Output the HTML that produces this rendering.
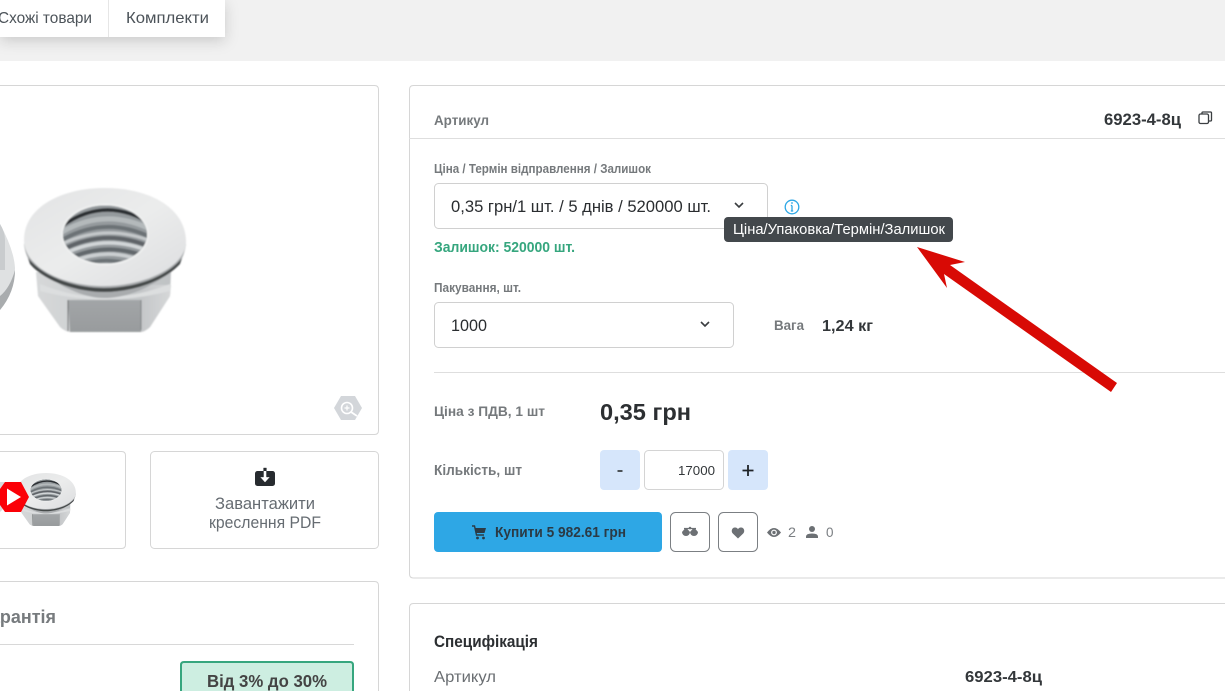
<!DOCTYPE html>
<html lang="uk">
<head>
<meta charset="utf-8">
<title>6923-4-8ц</title>
<style>
html,body{margin:0;padding:0;width:1225px;height:691px;overflow:hidden;background:#fff}
svg{display:block;overflow:hidden}
text{font-family:"Liberation Sans",Arial,sans-serif;white-space:pre}
.b{font-weight:700}
</style>
</head>
<body>
<svg width="1225" height="691" viewBox="0 0 1225 691" xmlns="http://www.w3.org/2000/svg">
<defs>
<filter id="sh" x="-20%" y="-50%" width="140%" height="220%"><feDropShadow dx="0" dy="4" stdDeviation="7" flood-color="#000" flood-opacity=".16"/></filter>
<filter id="soft" x="-5%" y="-5%" width="110%" height="110%"><feGaussianBlur stdDeviation=".7"/></filter>
<linearGradient id="fl" x1="0" y1="0" x2="1" y2="1"><stop offset="0" stop-color="#e2e3e4"/><stop offset=".5" stop-color="#ebecec"/><stop offset="1" stop-color="#dcdddf"/></linearGradient>
<linearGradient id="face" x1="0" y1="0" x2="0" y2="1"><stop offset="0" stop-color="#a2a5a7"/><stop offset="1" stop-color="#989b9d"/></linearGradient>
<linearGradient id="sideL" x1="0" y1="0" x2="1" y2="0"><stop offset="0" stop-color="#d6d8d9"/><stop offset="1" stop-color="#bfc2c4"/></linearGradient>
<linearGradient id="sideR" x1="0" y1="0" x2="1" y2="0"><stop offset="0" stop-color="#c4c6c8"/><stop offset="1" stop-color="#d6d8d9"/></linearGradient>
<clipPath id="hole"><ellipse cx="105" cy="234.500" rx="42" ry="29"/></clipPath>
<g id="nut" filter="url(#soft)">
  <path d="M36 272L38 296L60 327Q65 332 72 332H138Q145 332 150 327L170 296L171 272Z" fill="url(#sideL)"/>
  <path d="M141 285H171L170 296L150 327Q145 332 140 332Z" fill="url(#sideR)"/>
  <path d="M68 300H141V332H70Z" fill="url(#face)"/>
  <path d="M68 300V331" stroke="#5f6264" stroke-width="1"/>
  <path d="M141 300V330" stroke="#7d8082" stroke-width="1"/>
  <path d="M40 284Q104 310 170 284V291Q104 308 40 291Z" fill="#dcdedf"/>
  <path d="M24 244C26 262 36 271 48 277C66 289 86 298 104 298C126 298 146 289 164 277C176 270 184 260 186 244Z" fill="#a9acae"/>
  <path d="M28 258C46 280 80 288 104 288C130 288 164 280 182 258L180 264C162 283 130 292 104 292C80 292 46 283 30 264Z" fill="#45484a"/>
  <path d="M24 240C24 208 60 188 105 188C150 188 186 208 186 242C186 266 146 286 104 286C60 286 24 266 24 240Z" fill="url(#fl)"/>
  <ellipse cx="105" cy="234.500" rx="44" ry="31" fill="#eff0f0"/>
  <ellipse cx="105" cy="234.500" rx="42" ry="29" fill="#868c8f"/>
  <g clip-path="url(#hole)" fill="none">
    <rect x="60" y="204" width="90" height="62" fill="#949a9d" stroke="none"/>
    <path d="M62 226Q104 196 148 222" stroke="#2c2e30" stroke-width="3.500"/>
    <path d="M62 232Q104 208 148 228" stroke="#b4b9bb" stroke-width="5"/>
    <path d="M62 240Q104 216 148 236" stroke="#6c7276" stroke-width="4"/>
    <path d="M62 244Q104 224 148 240" stroke="#c4c8ca" stroke-width="3"/>
    <path d="M62 250Q104 228 148 246" stroke="#5e6367" stroke-width="4"/>
    <path d="M64 254Q104 234 146 250" stroke="#d2d6d8" stroke-width="3.500"/>
    <path d="M66 260Q104 241 144 256" stroke="#62686c" stroke-width="4"/>
    <path d="M70 263Q104 247 140 260" stroke="#cbcfd1" stroke-width="3.500"/>
    <path d="M72 268Q104 254 136 266" stroke="#6c7276" stroke-width="3.500"/>
    <path d="M78 270Q104 260 132 268" stroke="#aeb3b6" stroke-width="3"/>
  </g>
</g>
</defs>

<rect width="1225" height="691" fill="#fff"/>
<!-- top band -->
<rect width="1225" height="61" fill="#f1f1f1"/>
<path d="M0 0H225V37H0Z" fill="#fff" filter="url(#sh)"/>
<rect x="108" y="0" width="1" height="37" fill="#e6e6e6"/>
<text x="-2" y="23" font-size="16" fill="#4c5359" textLength="94" lengthAdjust="spacingAndGlyphs">Схожі товари</text>
<text x="126" y="23" font-size="16" fill="#4c5359" textLength="83" lengthAdjust="spacingAndGlyphs">Комплекти</text>

<!-- left cards -->
<path d="M0 85.500H374.500Q378.500 85.500 378.500 89.500V430.500Q378.500 434.500 374.500 434.500H0" fill="#fff" stroke="#d6d6d6"/>
<use href="#nut"/>
<path d="M0 224Q14 250 15 268Q15 292 0 310Z" fill="#dfe1e2"/>
<path d="M0 224Q5 232 5 240V270H0Z" fill="#c9ccce"/>
<path d="M0 296Q10 288 15 270Q15 292 0 310Z" fill="#a9acae"/>
<path d="M334 408L341 396H355L362 408L355 420H341Z" fill="#d3d6da"/>
<circle cx="347" cy="408" r="5.500" fill="none" stroke="#fff" stroke-width="1.600"/>
<path d="M344.500 408H349.500M347 405.500V410.500" stroke="#fff" stroke-width="1.200"/>
<path d="M351 412L357 416" stroke="#fff" stroke-width="1.800"/>

<path d="M0 451.500H121.500Q125.500 451.500 125.500 455.500V544.500Q125.500 548.500 121.500 548.500H0" fill="#fff" stroke="#d6d6d6"/>
<g transform="translate(7.400 403.800) scale(.368)"><use href="#nut"/></g>
<path d="M0 512Q8 505 10 494V482H0Z" fill="#d8dadb"/>
<path d="M0 489L5 482H21L29 497L21 512H5L0 505Z" fill="#fb0007"/>
<path d="M7 488.500L21 497L7 505.500Z" fill="#fff"/>

<rect x="150.500" y="451.500" width="228" height="97" rx="4" fill="#fff" stroke="#d6d6d6"/>
<rect x="255" y="471" width="20" height="15" rx="2.500" fill="#272b2f"/>
<path d="M263.500 468H266.500V477H270L265 482.500L260 477H263.500Z" fill="#fff" stroke="#272b2f" stroke-width=".4"/>
<path d="M263.700 468H266.300V471H263.700Z" fill="#272b2f"/>
<text x="215" y="509" font-size="16.500" fill="#666c72" textLength="100" lengthAdjust="spacingAndGlyphs">Завантажити</text>
<text x="209" y="528" font-size="16.500" fill="#666c72" textLength="112" lengthAdjust="spacingAndGlyphs">креслення PDF</text>

<path d="M0 581.500H374.500Q378.500 581.500 378.500 585.500V691" fill="#fff" stroke="#d6d6d6"/>
<text x="-20" y="623" font-size="18.500" class="b" fill="#777b7e" textLength="76" lengthAdjust="spacingAndGlyphs">Гарантія</text>
<rect x="0" y="644" width="354" height="1" fill="#d8d8d8"/>
<path d="M181 691V665Q181 662 184 662H350Q353 662 353 665V691" fill="#cdeee1" stroke="#36a67e" stroke-width="2"/>
<text x="207" y="687" font-size="17.500" class="b" fill="#444" textLength="120" lengthAdjust="spacingAndGlyphs">Від 3% до 30%</text>

<!-- main card -->
<path d="M1225 85.500H413.500Q409.500 85.500 409.500 89.500V574Q409.500 578 413.500 578H1225" fill="#fff" stroke="#d6d6d6"/>
<text x="434" y="125" font-size="14" class="b" fill="#75797c" textLength="55" lengthAdjust="spacingAndGlyphs">Артикул</text>
<text x="1104" y="125" font-size="17" class="b" fill="#33373a" textLength="77" lengthAdjust="spacingAndGlyphs">6923-4-8ц</text>
<rect x="1199" y="114" width="9.500" height="9.500" rx="1.500" fill="#fff" stroke="#3b3f42" stroke-width="1.300"/>
<path d="M1202 113.500V112.800Q1202 112 1203 112H1210.500Q1211.500 112 1211.500 113V120Q1211.500 121 1210.500 121H1209" fill="none" stroke="#3b3f42" stroke-width="1.300"/>
<rect x="409" y="138" width="816" height="1" fill="#dedede"/>

<text x="434" y="173" font-size="12.500" class="b" fill="#75797c" textLength="217" lengthAdjust="spacingAndGlyphs">Ціна / Термін відправлення / Залишок</text>
<rect x="434.500" y="183.500" width="333" height="45" rx="4" fill="#fff" stroke="#d0d0d0"/>
<text x="451" y="212" font-size="16.500" fill="#2a2d30" textLength="260" lengthAdjust="spacingAndGlyphs">0,35 грн/1 шт. / 5 днів / 520000 шт.</text>
<path d="M735 203L739 207L743 203" fill="none" stroke="#3a3d40" stroke-width="1.600"/>
<circle cx="792" cy="207" r="6.800" fill="none" stroke="#2ea7e5" stroke-width="1.300"/>
<path d="M792 205.500V211M790.800 211H793.200M790.800 205.500H792" fill="none" stroke="#2ea7e5" stroke-width="1.300"/>
<circle cx="792" cy="203" r=".9" fill="#2ea7e5"/>
<text x="434" y="252" font-size="14.500" class="b" fill="#36a67e" textLength="141" lengthAdjust="spacingAndGlyphs">Залишок: 520000 шт.</text>

<text x="434" y="292" font-size="12.500" class="b" fill="#75797c" textLength="87" lengthAdjust="spacingAndGlyphs">Пакування, шт.</text>
<rect x="434.500" y="302.500" width="299" height="45" rx="4" fill="#fff" stroke="#d0d0d0"/>
<text x="451" y="331" font-size="16.500" fill="#2a2d30" textLength="36" lengthAdjust="spacingAndGlyphs">1000</text>
<path d="M701 322L705 326L709 322" fill="none" stroke="#3a3d40" stroke-width="1.600"/>
<text x="774" y="330" font-size="13.500" class="b" fill="#75797c" textLength="30" lengthAdjust="spacingAndGlyphs">Вага</text>
<text x="822" y="331" font-size="16" class="b" fill="#33373a" textLength="51" lengthAdjust="spacingAndGlyphs">1,24 кг</text>
<rect x="434" y="372" width="791" height="1" fill="#dedede"/>

<text x="434" y="416" font-size="14" class="b" fill="#75797c" textLength="111" lengthAdjust="spacingAndGlyphs">Ціна з ПДВ, 1 шт</text>
<text x="600" y="420" font-size="23.500" class="b" fill="#2c2f32" textLength="91" lengthAdjust="spacingAndGlyphs">0,35 грн</text>

<text x="434" y="475" font-size="14.500" class="b" fill="#75797c" textLength="88" lengthAdjust="spacingAndGlyphs">Кількість, шт</text>
<rect x="600" y="450" width="40" height="40" rx="4" fill="#d6e6fb"/>
<path d="M617.500 471H622.500" stroke="#33373a" stroke-width="1.700"/>
<rect x="644.500" y="450.500" width="79" height="39" rx="4" fill="#fff" stroke="#d4d4d4"/>
<text x="678" y="475" font-size="13" fill="#33373a" textLength="37" lengthAdjust="spacingAndGlyphs">17000</text>
<rect x="728" y="450" width="40" height="40" rx="4" fill="#d6e6fb"/>
<path d="M748 465V476M742.500 470.500H753.500" stroke="#1f2327" stroke-width="1.800"/>

<rect x="434" y="512" width="228" height="40" rx="4" fill="#2ea7e5"/>
<path d="M472 526H474.500L476.500 535H484" fill="none" stroke="#2b3a45" stroke-width="1.400"/>
<path d="M475 528H486L484.500 533H476.200Z" fill="#2b3a45"/>
<circle cx="477.500" cy="538" r="1.400" fill="#2b3a45"/><circle cx="483.500" cy="538" r="1.400" fill="#2b3a45"/>
<text x="495" y="537" font-size="14.500" class="b" fill="#2b3a45" textLength="131" lengthAdjust="spacingAndGlyphs">Купити 5 982.61 грн</text>

<rect x="670.500" y="512.500" width="39" height="39" rx="5" fill="#fff" stroke="#7b7f83"/>
<path d="M684 528.500H696" stroke="#6c7074" stroke-width="1.200"/>
<circle cx="690" cy="528" r="1.300" fill="#6c7074"/>
<path d="M682 532A4 4 0 0 0 690 532L687 528.500H685ZM690 532A4 4 0 0 0 698 532L695 528.500H693Z" fill="#6c7074"/>
<rect x="718.500" y="512.500" width="39" height="39" rx="5" fill="#fff" stroke="#7b7f83"/>
<path d="M738 538.500L732.800 533.500C730.500 531 732.300 527 735.300 527.500C736.500 527.500 737.500 528.300 738 529.200C738.500 528.300 739.500 527.500 740.700 527.500C743.700 527 745.500 531 743.200 533.500Z" fill="#6c7074"/>
<path d="M767 532.500Q774 523.500 781 532.500Q774 541.500 767 532.500Z" fill="#6c7074"/>
<circle cx="774" cy="532.500" r="2.900" fill="#fff"/><circle cx="774" cy="532.500" r="1.700" fill="#6c7074"/>
<text x="788" y="537" font-size="14" fill="#7a7e82" textLength="8" lengthAdjust="spacingAndGlyphs">2</text>
<circle cx="812" cy="529" r="3" fill="#6c7074"/>
<path d="M806 538V536.500Q806 533.500 812 533.500Q818 533.500 818 536.500V538Z" fill="#6c7074"/>
<text x="826" y="537" font-size="14" fill="#7a7e82" textLength="7.500" lengthAdjust="spacingAndGlyphs">0</text>

<!-- tooltip -->
<rect x="724" y="217" width="229" height="25" rx="4" fill="#43484c"/>
<text x="733" y="234" font-size="14.500" fill="#fff" textLength="212" lengthAdjust="spacingAndGlyphs">Ціна/Упаковка/Термін/Залишок</text>

<!-- arrow -->
<polygon points="917,247 965,262 950,265 1117,383 1111,392 944,274 947,288" fill="#d80a05"/>

<!-- spec card -->
<path d="M1225 603.500H413.500Q409.500 603.500 409.500 607.500V691" fill="#fff" stroke="#d6d6d6"/>
<text x="434" y="647" font-size="16.500" class="b" fill="#2c2f32" textLength="104" lengthAdjust="spacingAndGlyphs">Специфікація</text>
<text x="434" y="682" font-size="16" fill="#6a6e72" textLength="62" lengthAdjust="spacingAndGlyphs">Артикул</text>
<text x="965" y="682" font-size="16" class="b" fill="#33373a" textLength="77" lengthAdjust="spacingAndGlyphs">6923-4-8ц</text>
</svg>
</body>
</html>
